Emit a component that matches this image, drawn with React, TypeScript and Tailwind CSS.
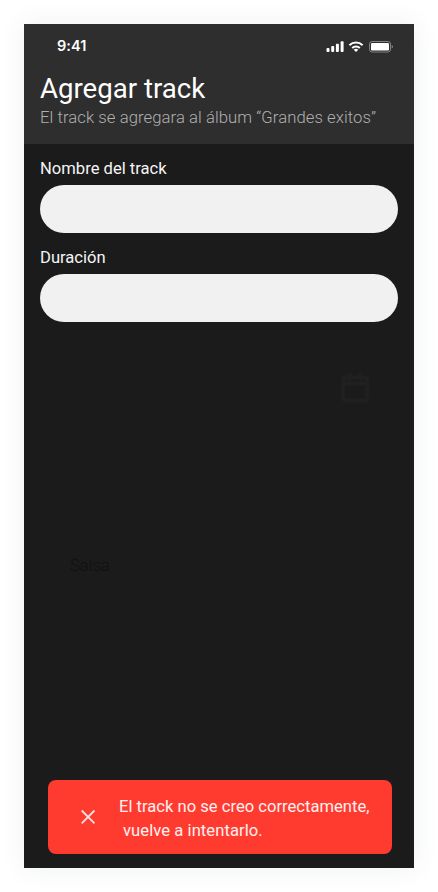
function StatusIcons() {
  return (
    <svg width="68" height="14" viewBox="0 0 68 14" fill="white" aria-hidden="true">
      <rect x="0.5" y="9" width="3" height="4" rx="0.9" />
      <rect x="5.2" y="7" width="3" height="6" rx="0.9" />
      <rect x="9.9" y="4.8" width="3" height="8.2" rx="0.9" />
      <rect x="14.6" y="2.3" width="3" height="10.7" rx="0.9" />
      <g transform="translate(-0.8 0)" fill="none" stroke="white" strokeWidth="2">
        <path d="M24.2 6.2a9.6 9.6 0 0 1 13.2 0" />
        <path d="M27 9.1a5.6 5.6 0 0 1 7.6 0" />
        <path d="M28.5 10.7a3.4 3.4 0 0 1 4.6 0l-2.3 2.3z" fill="white" stroke="none" />
      </g>
      <rect x="43.5" y="2.5" width="21" height="10.5" rx="2.6" fill="none" stroke="white" strokeOpacity="0.4" />
      <rect x="45" y="4" width="18" height="7.5" rx="1.2" />
      <path d="M65.7 6v3.600c.7-.3 1.200-1 1.200-1.800s-.5-1.500-1.200-1.800z" fillOpacity="0.45" />
    </svg>
  );
}

function CalendarIcon() {
  return (
    <svg width="28" height="31" viewBox="0 0 28 31" fill="none" stroke="#202020" strokeWidth="4" strokeLinecap="round" aria-hidden="true">
      <rect x="2" y="5.5" width="24" height="23" rx="2.5" />
      <path d="M2 11.5h24M9 2.5v5M19.5 2.5v5" />
    </svg>
  );
}

function Field({ label, id }: { label: string; id: string }) {
  return (
    <div className="flex flex-col">
      <label htmlFor={id} className="flex h-[25px] items-center text-[16.6px] leading-6 text-[#f5f5f5]">
        {label}
      </label>
      <input id={id} className="mt-1 h-12 w-full rounded-full bg-[#f1f1f1] px-5 text-[#1b1b1b] outline-none" />
    </div>
  );
}

export default function App() {
  return (
    <div className="h-[892px] w-[438px] overflow-hidden bg-white p-6 font-['Roboto',sans-serif]">
      <main className="flex h-[844px] w-[390px] flex-col bg-[#1b1b1b] shadow-[0_0_24px_rgba(40,60,90,0.08)]">
        <header className="h-[120px] bg-[#2e2e2e]">
          <div className="flex h-11 items-center justify-between pr-5 pl-[33px]">
            <span className="font-['Inter',sans-serif] text-[14.5px] font-semibold tracking-[0.05px] text-white">9:41</span>
            <StatusIcons />
          </div>
          <h1 className="pt-px pl-4 text-[27.6px] leading-10 whitespace-nowrap text-white">Agregar track</h1>
          <p className="-mt-px pl-4 text-[16.7px] leading-[19px] font-light tracking-[0.06px] whitespace-nowrap text-[#b0b0b0]">
            El track se agregara al álbum “Grandes exitos”
          </p>
        </header>
        <form className="flex flex-col gap-3 px-4 pt-3">
          <Field id="name" label="Nombre del track" />
          <Field id="duration" label="Duración" />
        </form>
        <div className="mt-[50px] flex justify-end pr-[45px]">
          <CalendarIcon />
        </div>
        <div className="mt-[151px] pl-[46px] text-[16.6px] leading-6 font-light text-[#101010]">Salsa</div>
        <div role="alert" className="mt-auto mr-[22px] mb-[14px] ml-6 flex h-[74px] items-center rounded-lg bg-[#ff3b30] text-[#fff1f0]">
          <svg className="ml-8 shrink-0" width="16" height="16" viewBox="0 0 16 16" fill="none" stroke="#f1e1e3" strokeWidth="1.8" aria-hidden="true">
            <path d="M1.7 1.5l12.8 12.8M14.500 1.500L1.700 14.300" />
          </svg>
          <div className="ml-[23px] flex flex-col pt-1 text-[16.6px] leading-6 whitespace-nowrap">
            <span>El track no se creo correctamente,</span>
            <span className="pl-1 tracking-[0.06px]">vuelve a intentarlo.</span>
          </div>
        </div>
      </main>
    </div>
  );
}
